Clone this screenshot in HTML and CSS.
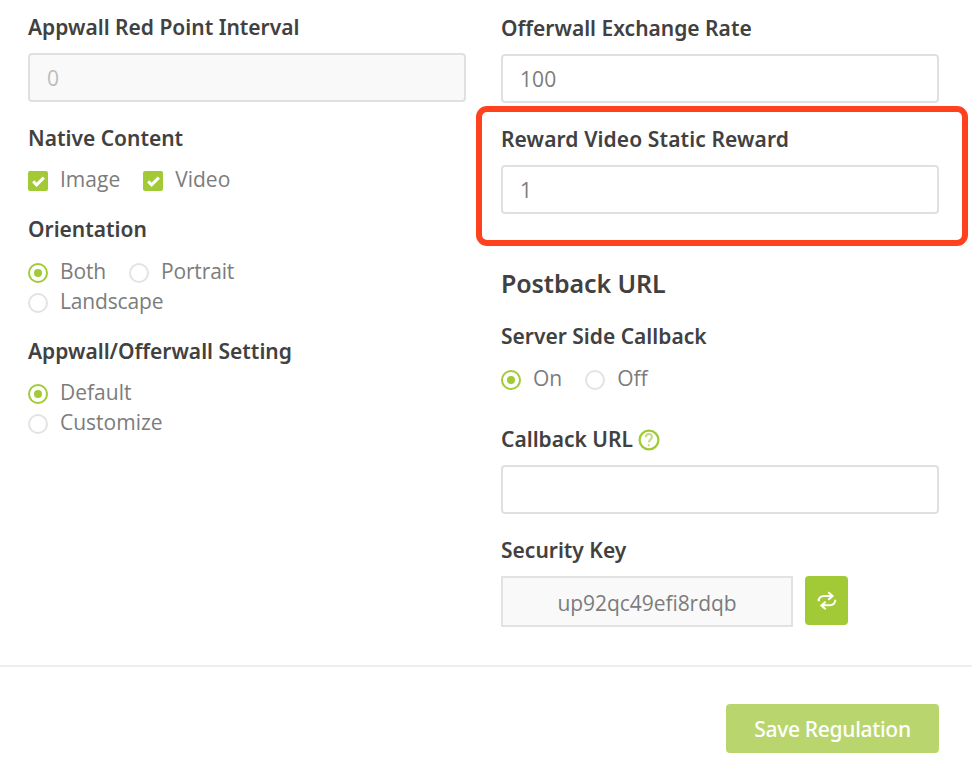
FILE: index.html
```html
<!DOCTYPE html>
<html lang="en">
<head>
<meta charset="utf-8">
<title>Regulation</title>
<link rel="stylesheet" href="styles.css">
</head>
<body>
<svg class="sprite" aria-hidden="true">
  <symbol id="tick" viewBox="0 0 20 20"><path d="M5.2 10.400 8.600 13.800 15.800 6.600" fill="none" stroke="#fff" stroke-width="3"/></symbol>
</svg>
<main class="form">
  <section class="column">
    <h3 class="label">Appwall Red Point Interval</h3>
    <div class="input disabled">0</div>

    <h3 class="label after-input">Native Content</h3>
    <div class="options">
      <label class="option"><svg class="check"><use href="#tick"/></svg>Image</label>
      <label class="option"><svg class="check"><use href="#tick"/></svg>Video</label>
    </div>

    <h3 class="label">Orientation</h3>
    <div class="options tight">
      <label class="option"><i class="radio on"></i>Both</label>
      <label class="option"><i class="radio"></i>Portrait</label>
      <label class="option"><i class="radio"></i>Landscape</label>
    </div>

    <h3 class="label">Appwall/Offerwall Setting</h3>
    <div class="options stacked">
      <label class="option"><i class="radio on"></i>Default</label>
      <label class="option"><i class="radio"></i>Customize</label>
    </div>
  </section>

  <section class="column right">
    <h3 class="label">Offerwall Exchange Rate</h3>
    <div class="input">100</div>

    <div class="highlight">
      <h3 class="label wide">Reward Video Static Reward</h3>
      <div class="input">1</div>
    </div>

    <h2 class="title">Postback URL</h2>
    <h3 class="label">Server Side Callback</h3>
    <div class="options">
      <label class="option"><i class="radio on"></i>On</label>
      <label class="option"><i class="radio"></i>Off</label>
    </div>

    <h3 class="label callback">Callback URL
      <svg class="help" viewBox="0 0 22 22"><circle cx="11" cy="11" r="9.400" fill="none" stroke="#a2ca37" stroke-width="2.300"/><path d="M7.900 8.200C8 3.900 14.200 4 14 8c-.1 2.200-2.900 2.900-3.100 5.300M10.700 15.200v2" fill="none" stroke="#a2ca37" stroke-width="2" stroke-opacity=".65"/></svg>
    </h3>
    <div class="input"></div>

    <h3 class="label security">Security Key</h3>
    <div class="key-row">
      <div class="key">up92qc49efi8rdqb</div>
      <button class="refresh" aria-label="Refresh key">
        <svg viewBox="0 0 20 20"><path d="M1.700 10.200C1.500 6.800 4.100 5 7 5h8.200M11.300 1.200l4.300 3.800-4.300 3.800M18.300 8.800c.2 3.400-2.400 5.500-5.300 5.500H4.800M8.700 10.700l-4.300 3.700 4.300 3.800" fill="none" stroke="#fff" stroke-width="2"/></svg>
      </button>
    </div>
  </section>
</main>
<footer class="footer"><button class="save">Save Regulation</button></footer>
</body>
</html>
```
FILE: styles.css
```css
* { box-sizing: border-box; }

body {
  margin: 0;
  background: #fff;
  color: #7c7c7c;
  font: 21px/30px "Open Sans", "Noto Sans", sans-serif;
}

.sprite { display: none; }

.form {
  display: grid;
  grid-template-columns: 438px 438px;
  column-gap: 35px;
  height: 665px;
  padding: 12px 0 0 28px;
}

.right { padding-top: 1px; }

.label,
.title {
  margin: 0;
  color: #414141;
  font: 600 21px/30px "Noto Sans", sans-serif;
}

.label.wide { letter-spacing: .11px; }

.title {
  margin: 20px 0 21px;
  font-size: 25px;
  line-height: 34px;
  letter-spacing: -.1px;
}

.input {
  height: 49px;
  margin-top: 11px;
  padding: 1px 17px 0;
  border: 2px solid #e0e0e0;
  border-radius: 4px;
  line-height: 44px;
  letter-spacing: .1px;
}

.input.disabled {
  background: #f9f9f9;
  color: #bcbcbc;
}

.after-input { margin-top: 21px; }

.options {
  display: flex;
  flex-wrap: wrap;
  column-gap: 23px;
  max-width: 300px;
  margin: 12px 0 20px;
}

.after-input + .options { margin-top: 11px; }

.options.tight .option { letter-spacing: -.15px; }

.options.stacked {
  flex-direction: column;
  margin-top: 11px;
}

.option {
  display: flex;
  align-items: center;
}

.check,
.radio {
  flex: none;
  width: 20px;
  height: 20px;
  margin: 4px 12px 0 0;
}

.check {
  border-radius: 2px;
  background: #a2ca37;
}

.radio {
  display: grid;
  place-items: center;
  border: 2px solid #e3e3e3;
  border-radius: 50%;
}

.radio.on { border-color: #a2ca37; }

.radio.on::before {
  width: 8px;
  height: 8px;
  border-radius: 50%;
  background: #a2ca37;
  content: "";
}

/* Callout frame around the reward field */
.highlight {
  width: 492px;
  height: 140px;
  margin: 3px 0 0 -25px;
  padding: 12px 23px 0 19px;
  border: 6px solid #ff421d;
  border-radius: 11px;
}

.callback {
  display: flex;
  align-items: center;
  gap: 5px;
  margin-top: 31px;
}

.help {
  width: 22px;
  height: 22px;
  margin-top: 1px;
}

.security { margin-top: 21px; }

.key-row {
  display: flex;
  gap: 12px;
  margin-top: 11px;
}

.key {
  width: 292px;
  height: 51px;
  padding-top: 2px;
  border: 2px solid #e2e2e2;
  background: #f9f9f9;
  line-height: 46px;
  text-align: center;
  letter-spacing: -.06px;
}

.refresh {
  display: grid;
  place-items: center;
  width: 43px;
  height: 49px;
  padding: 0;
  border: 0;
  border-radius: 4px;
  background: #a2ca37;
}

.refresh svg {
  width: 20px;
  height: 20px;
}

.footer {
  display: flex;
  justify-content: flex-end;
  padding: 37px 33px 0 0;
  border-top: 2px solid #eee;
}

.save {
  width: 213px;
  height: 49px;
  padding: 2px 0 0;
  border: 0;
  border-radius: 4px;
  background: #b9d66e;
  color: #fff;
  font: 500 21px/47px "Noto Sans", sans-serif;
  letter-spacing: -.3px;
}
```
